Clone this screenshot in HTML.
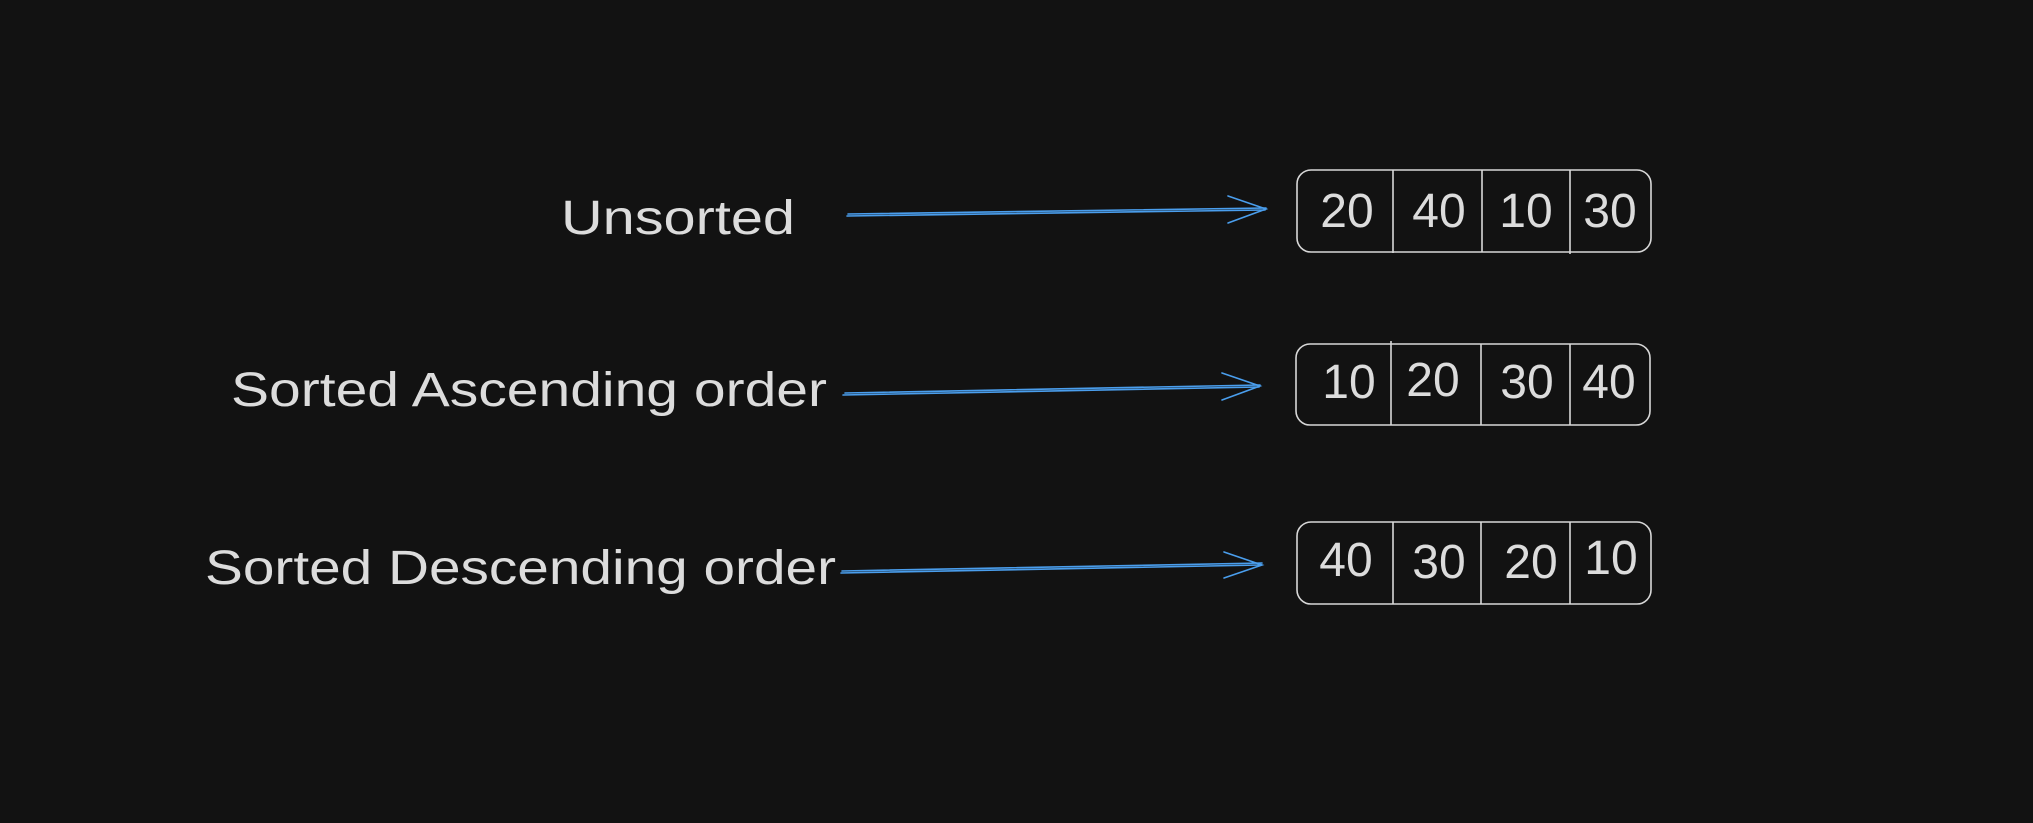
<!DOCTYPE html>
<html><head><meta charset="utf-8"><style>
html,body{margin:0;padding:0;background:#121212;}
svg{display:block}
text{font-family:"Liberation Sans",sans-serif;fill:#dcdcdc;}
</style></head><body>
<svg width="2033" height="823" viewBox="0 0 2033 823" xmlns="http://www.w3.org/2000/svg">
<rect width="2033" height="823" fill="#121212"/>
<g font-size="48">
<text x="561" y="234" textLength="234" lengthAdjust="spacingAndGlyphs">Unsorted</text>
<text x="231" y="406" textLength="596" lengthAdjust="spacingAndGlyphs">Sorted Ascending order</text>
<text x="205" y="584" textLength="631" lengthAdjust="spacingAndGlyphs">Sorted Descending order</text>
</g>
<g stroke="#4a9eed" stroke-width="1.6" fill="none" stroke-linecap="round">
<path d="M847 216 L1265 210 M848 214 L1266 208"/>
<path d="M1228 196 L1266 209 L1228 223"/>
<path d="M843 395 L1259 387 M845 393 L1260 385"/>
<path d="M1222 373 L1260 386 L1222 400"/>
<path d="M841 573 L1261 565 M842 571 L1262 563"/>
<path d="M1224 552 L1262 565 L1224 578"/>
</g>
<g stroke="#d8d8d8" stroke-width="1.6" fill="none">
<rect x="1297" y="170" width="354" height="82" rx="14"/>
<path d="M1393 170V253 M1482 170V252 M1570 170V254"/>
<rect x="1296" y="344" width="354" height="81" rx="14"/>
<path d="M1391 341V425 M1481 344V425 M1570 344V425"/>
<rect x="1297" y="522" width="354" height="82" rx="14"/>
<path d="M1393 522V604 M1481 522V604 M1570 522V604"/>
</g>
<g font-size="48" text-anchor="middle">
<text x="1347" y="227">20</text><text x="1439" y="227">40</text><text x="1526" y="227">10</text><text x="1610" y="227">30</text>
<text x="1349" y="398">10</text><text x="1433" y="396">20</text><text x="1527" y="398">30</text><text x="1609" y="398">40</text>
<text x="1346" y="576">40</text><text x="1439" y="578">30</text><text x="1531" y="578">20</text><text x="1611" y="574">10</text>
</g>
</svg>
</body></html>
